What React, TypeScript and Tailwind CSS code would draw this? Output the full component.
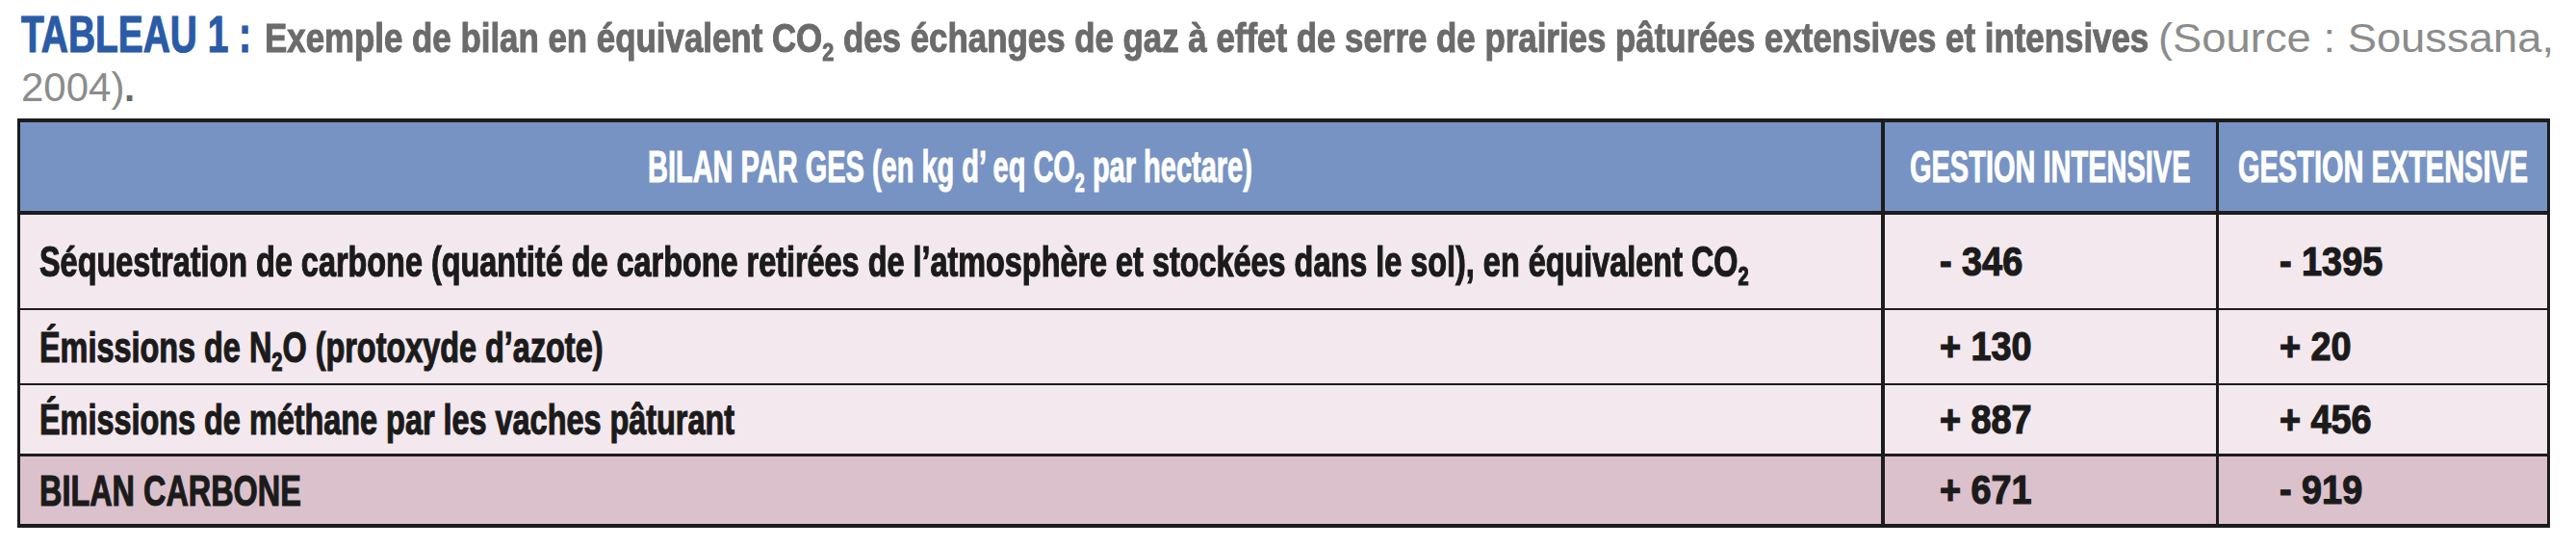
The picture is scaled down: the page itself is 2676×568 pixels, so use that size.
import React, { useLayoutEffect, useRef, useState } from "react";

// condensed look: Liberation Sans squeezed horizontally, outer box keeps the squeezed width
function Narrow({
  scale,
  className = "",
  children,
}: {
  scale: number;
  className?: string;
  children: React.ReactNode;
}) {
  const inner = useRef<HTMLSpanElement>(null);
  const [width, setWidth] = useState<number | undefined>(undefined);

  useLayoutEffect(() => {
    if (inner.current) setWidth(inner.current.offsetWidth * scale);
  }, [scale]);

  return (
    <span className={`inline-block leading-none ${className}`} style={{ width }}>
      <span
        ref={inner}
        className="inline-block whitespace-nowrap origin-left"
        style={{ transform: `scaleX(${scale})` }}
      >
        {children}
      </span>
    </span>
  );
}

const Sub = ({ children }: { children: React.ReactNode }) => (
  <span className="relative top-[0.34em] text-[0.62em] leading-none">{children}</span>
);

type Row = {
  label: React.ReactNode;
  intensive: string;
  extensive: string;
  height: string;
  bg: string;
  border: string;
};

const rows: Row[] = [
  {
    label: (
      <>
        Séquestration de carbone (quantité de carbone retirées de l’atmosphère et stockées dans le sol), en
        équivalent CO<Sub>2</Sub>
      </>
    ),
    intensive: "- 346",
    extensive: "- 1395",
    height: "h-[99px]",
    bg: "bg-[#f3e8ee]",
    border: "border-b-2",
  },
  {
    label: (
      <>
        Émissions de N<Sub>2</Sub>O (protoxyde d’azote)
      </>
    ),
    intensive: "+ 130",
    extensive: "+ 20",
    height: "h-[78px]",
    bg: "bg-[#f3e8ee]",
    border: "border-b-2",
  },
  {
    label: "Émissions de méthane par les vaches pâturant",
    intensive: "+ 887",
    extensive: "+ 456",
    height: "h-[74px]",
    bg: "bg-[#f3e8ee]",
    border: "border-b-[3px]",
  },
  {
    label: "BILAN CARBONE",
    intensive: "+ 671",
    extensive: "- 919",
    height: "h-[70px]",
    bg: "bg-[#dbc1cc]",
    border: "",
  },
];

export default function App() {
  return (
    <div className="w-[2676px] h-[568px] overflow-hidden bg-white font-['Liberation_Sans',Arial,sans-serif]">
      {/* Caption */}
      <div className="h-[123px] pl-[22px]">
        <div className="flex items-baseline h-[64px] pt-[8px]">
          <Narrow scale={0.72} className="text-[54px] font-bold text-[#2a5ba6] [-webkit-text-stroke:1.2px_currentColor]">
            TABLEAU 1 :
          </Narrow>
          <Narrow scale={0.83} className="ml-[14px] text-[42px] font-bold text-[#6b6b6b] [-webkit-text-stroke:1px_currentColor]">
            Exemple de bilan en équivalent CO<Sub>2</Sub> des échanges de gaz à effet de serre de prairies pâturées
            extensives et intensives
          </Narrow>
          <Narrow scale={1.08} className="ml-[10px] text-[42px] text-[#8c8c8c]">
            (Source : Soussana,
          </Narrow>
        </div>
        <div className="flex items-baseline pt-[6px]">
          <Narrow scale={1} className="text-[42px] text-[#8c8c8c]">
            2004)
          </Narrow>
          <Narrow scale={1} className="text-[40px] font-bold text-[#6b6b6b]">
            .
          </Narrow>
        </div>
      </div>

      {/* Table */}
      <div className="ml-[18px] w-[2631px] border-y-4 border-x-[3px] border-[#1c1c1c] text-[#1b1b1b]">
        <div className="flex h-[96px] border-b-4 border-[#1c1c1c] bg-[#7793c3] text-white [-webkit-text-stroke:1px_currentColor]">
          <div className="w-[1933px] flex items-center justify-center">
            <Narrow scale={0.63} className="text-[46px] font-bold">
              BILAN PAR GES (en kg d’ eq CO<Sub>2</Sub> par hectare)
            </Narrow>
          </div>
          <div className="w-[348px] border-l-4 border-[#1c1c1c] flex items-center justify-center">
            <Narrow scale={0.63} className="text-[46px] font-bold">
              GESTION INTENSIVE
            </Narrow>
          </div>
          <div className="w-[344px] border-l-[3px] border-[#1c1c1c] flex items-center justify-center">
            <Narrow scale={0.63} className="text-[46px] font-bold">
              GESTION EXTENSIVE
            </Narrow>
          </div>
        </div>

        {rows.map((row, i) => (
          <div
            key={i}
            className={`flex ${row.height} ${row.bg} ${row.border} border-[#1c1c1c] [-webkit-text-stroke:1.2px_currentColor]`}
          >
            <div className="w-[1933px] pl-[20px] flex items-center">
              <Narrow scale={0.72} className="text-[45px] font-bold">
                {row.label}
              </Narrow>
            </div>
            <div className="w-[348px] border-l-4 border-[#1c1c1c] pl-[57px] flex items-center">
              <Narrow scale={0.9} className="text-[42px] font-bold">
                {row.intensive}
              </Narrow>
            </div>
            <div className="w-[344px] border-l-[3px] border-[#1c1c1c] pl-[63px] flex items-center">
              <Narrow scale={0.9} className="text-[42px] font-bold">
                {row.extensive}
              </Narrow>
            </div>
          </div>
        ))}
      </div>
    </div>
  );
}
